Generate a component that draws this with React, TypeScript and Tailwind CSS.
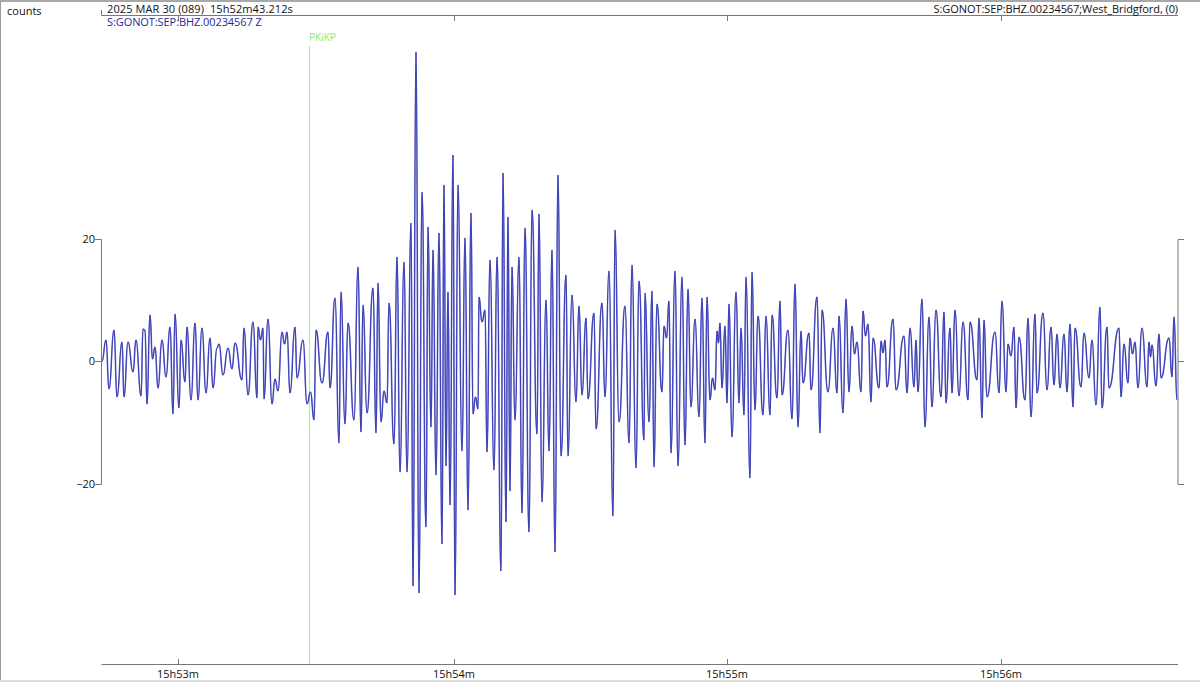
const ups = [
  [106,340],[114,330],[122,342],[128,342],[136,340],[143,329],[145,330],[150,315],[155,347],[162,340],[170,327],[175,314],[181,340],[187,327],[195,323],[202,328],[210,338],[217,348],[219,344],[228,348],[235,343],[244,328],[253,322],[258,327],[263,328],[268,319],[282,332],[287,332],[295,327],[303,340],[316,330],[328,332],
  [335,298],[341,292],[348,323],[358,267],[363,305],[373,288],[378,283],[389,303],[397,257],[404,262],[411,223],[416,52],[422,192],[428,227],[433,250],[439,233],[444,185],[448,292],[453,155],[458,185],[465,238],[471,213],[479,297],[485,310],[490,260],[497,257],[503,173],[508,217],[512,267],[519,257],[525,228],[532,210],[539,214],[546,300],[552,250],[558,175],[566,275],[572,295],[579,306],[586,318],[594,313],
  [602,303],[609,271],[615,230],[625,306],[632,265],[639,281],[645,293],[652,291],[657,304],[664,326],[669,301],[675,271],[682,277],[688,289],[695,319],[702,298],[707,297],[717,331],[720,323],[725,326],[729,304],[736,292],[741,328],[746,277],[752,272],[758,316],[766,316],[772,315],[780,301],[788,330],[795,284],[801,331],[809,333],[817,297],[822,310],[833,328],[839,316],[846,299],[852,326],[857,342],[863,311],[868,324],[873,338],[881,341],[885,340],[893,319],
  [904,336],[910,328],[916,340],[922,299],[929,317],[936,310],[944,312],[950,328],[955,310],[963,322],[970,322],[979,318],[984,320],[995,332],[1002,301],[1008,344],[1014,327],[1019,337],[1028,318],[1035,314],[1043,313],[1051,327],[1057,334],[1064,334],[1070,324],[1075,328],[1084,333],[1092,340],[1100,307],[1107,327],[1119,328],[1124,344],[1130,338],[1135,342],[1142,328],[1149,342],[1152,345],[1159,334],[1169,338],[1174,317],
]

const lows = [
  [109,389],[117,397],[124,397],[133,372],[141,396],[147,404],[158,388],[166,377],[173,414],[179,408],[185,382],[191,400],[198,400],[206,393],[213,388],[223,375],[232,369],[242,380],[248,395],[257,398],[264,399],[272,404],[278,391],[290,393],[297,378],[307,404],[314,420],[322,383],[330,388],
  [339,443],[345,424],[354,420],[361,432],[367,413],[376,433],[381,422],[387,403],[394,444],[400,472],[407,472],[413,586],[419,593],[426,527],[431,427],[436,475],[442,544],[446,466],[450,505],[455,595],[462,451],[468,510],[473,414],[478,409],[487,452],[494,470],[501,571],[506,522],[510,491],[515,420],[522,513],[529,532],[537,434],[542,502],[549,451],[555,552],[561,456],[568,456],[576,402],[582,395],[588,399],[596,429],
  [605,397],[613,516],[619,422],[629,443],[636,468],[644,440],[649,422],[654,467],[662,392],[671,453],[678,466],[685,445],[691,407],[699,417],[705,443],[710,400],[715,390],[722,388],[727,403],[732,437],[739,403],[744,415],[750,478],[755,410],[763,415],[770,415],[777,398],[782,395],[792,419],[798,427],[803,383],[811,390],[820,433],[828,392],[837,393],[843,413],[849,392],[861,392],[871,402],[879,388],[887,387],[896,390],
  [907,393],[914,387],[918,392],[925,427],[932,407],[941,397],[946,403],[952,393],[959,396],[968,400],[977,380],[982,418],[987,397],[999,393],[1006,392],[1016,408],[1025,400],[1031,417],[1037,393],[1047,390],[1054,385],[1060,388],[1067,392],[1073,407],[1081,387],[1089,378],[1096,405],[1102,408],[1109,388],[1121,397],[1128,383],[1138,388],[1147,387],[1156,386],[1161,378],[1172,377],[1177,400],
]

const sorted = [
  ...ups.map(([x, y]) => ({ x, y, up: true })),
  ...lows.map(([x, y]) => ({ x, y, up: false })),
].sort((a, b) => a.x - b.x)

// two crests in a row need a small dip between them, same for troughs
const points: { x: number; y: number; up: boolean }[] = [{ x: 102, y: 361, up: false }]
for (const p of sorted) {
  const prev = points[points.length - 1]
  if (prev.up === p.up && p.x - prev.x >= 3) {
    const mid = (prev.x + p.x) / 2
    points.push({ x: mid, y: p.up ? Math.max(prev.y, p.y) + 12 : Math.min(prev.y, p.y) - 12, up: !p.up })
  }
  points.push(p)
}

// flat tangents at each extreme so the trace rounds off like a real signal
const trace = points.reduce((d, { x, y }, i) => {
  if (i === 0) return `M${x} ${y}`
  const prev = points[i - 1]
  const mx = (prev.x + x) / 2
  return `${d}C${mx} ${prev.y} ${mx} ${y} ${x} ${y}`
}, '')

const timeTicks = [
  { x: 178, label: '15h53m' },
  { x: 454, label: '15h54m' },
  { x: 727, label: '15h55m' },
  { x: 1001, label: '15h56m' },
]

const ampTicks = [
  { y: 239, label: '20' },
  { y: 361, label: '0' },
  { y: 484, label: '\u221220' },
]

export default function App() {
  return (
    <div className="flex h-[682px] w-[1200px] flex-col overflow-hidden bg-white">
      <div className="h-[2px] bg-[#a8a8a8]" />
      <div className="flex min-h-0 flex-1">
        <div className="w-[1px] bg-[#9a9a9a]" />
        {/* Seismogram, coordinates offset so they read as page pixels */}
        <svg
          viewBox="1 2 1199 678"
          className="h-[678px] w-[1199px] text-[11px] [font-family:'Open_Sans',sans-serif]"
        >
          <g fill="none" stroke="#777" strokeWidth="1">
            <path d="M101.5 10V15.5H1178" />
            <path d="M101.5 664.5H1178" />
            <path d="M95 239.5H101.5V484.5H95M95 361.5H101.5" />
            <path d="M1184 239.5H1178V484.5H1184M1178 361.5H1184" />
            {timeTicks.map(t => (
              <g key={t.x}>
                <path d={`M${t.x + 0.5} 15.5V21`} />
                <path d={`M${t.x + 0.5} 659V664.5`} />
              </g>
            ))}
          </g>

          <path d="M309.5 46V664" stroke="#a2f788" strokeWidth="1.2" />
          <path d={trace} fill="none" stroke="#7478d6" strokeWidth="1.6" strokeLinejoin="round" />
          <path d={trace} fill="none" stroke="#14189a" strokeWidth="0.6" strokeLinejoin="round" />

          <text x="7" y="15" fill="#111">counts</text>
          <text x="107" y="13" fill="#111" xmlSpace="preserve" letterSpacing="0.1">2025 MAR 30 (089)  15h52m43.212s</text>
          <text x="107" y="26" fill="#1c2a9c" letterSpacing="-0.08">S:GONOT:SEP:BHZ.00234567 Z</text>
          <text x="309" y="41" fill="#86ee68" className="text-[10px]">PKiKP</text>
          <text x="1178" y="13" fill="#111" textAnchor="end" letterSpacing="-0.08">S:GONOT:SEP:BHZ.00234567;West_Bridgford, (0)</text>

          {ampTicks.map(t => (
            <text key={t.y} x="95" y={t.y + 4} fill="#111" textAnchor="end">{t.label}</text>
          ))}
          {timeTicks.map(t => (
            <text key={t.x} x={t.x} y="678" fill="#111" textAnchor="middle">{t.label}</text>
          ))}
        </svg>
      </div>
      <div className="h-[2px] bg-[#dcdcdc]" />
    </div>
  )
}
